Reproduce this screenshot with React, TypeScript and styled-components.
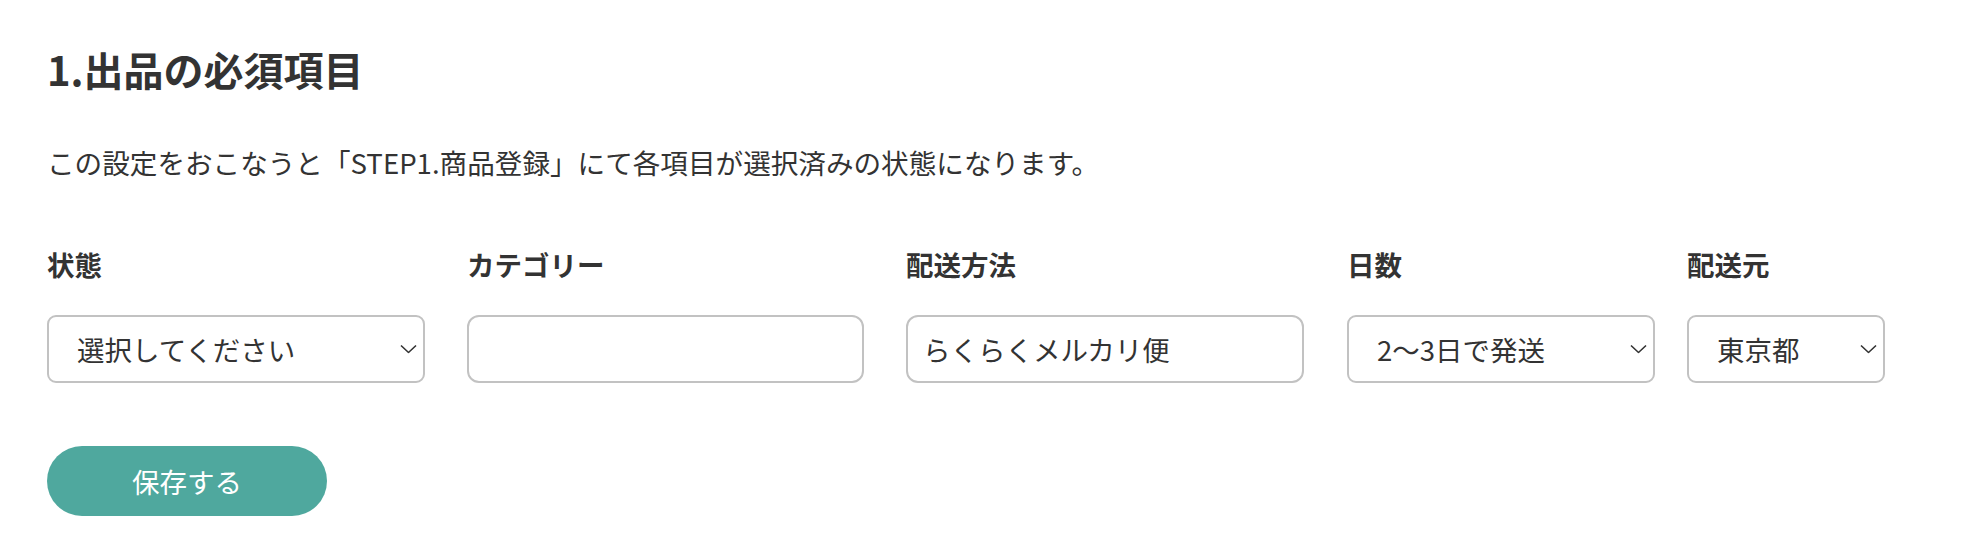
import styled, { createGlobalStyle } from "styled-components";

const FONT = `"Noto Sans CJK JP", "Noto Sans", sans-serif`;

const GlobalStyle = createGlobalStyle`
  body {
    margin: 0;
    background: #ffffff;
    font-family: ${FONT};
    color: #333333;
  }
`;

type FieldDef = {
  label: string;
  kind: "select" | "input";
  value: string;
  width: number;
  space: number;
};

const FIELDS: FieldDef[] = [
  { label: "状態", kind: "select", value: "選択してください", width: 378, space: 42 },
  { label: "カテゴリー", kind: "input", value: "", width: 397, space: 42 },
  { label: "配送方法", kind: "input", value: "らくらくメルカリ便", width: 398, space: 43 },
  { label: "日数", kind: "select", value: "2〜3日で発送", width: 308, space: 32 },
  { label: "配送元", kind: "select", value: "東京都", width: 198, space: 0 },
];

function Chevron() {
  return (
    <ChevronIcon width="17" height="9" viewBox="0 0 17 9" fill="none">
      <path d="M1 1 L8.5 8 L16 1" stroke="#333" strokeWidth="1.6" />
    </ChevronIcon>
  );
}

function RequiredSettings() {
  return (
    <Section>
      <Title>1.出品の必須項目</Title>
      <Lead>
        この設定をおこなうと「STEP1.商品登録」にて各項目が選択済みの状態になります。
      </Lead>
      <FieldRow>
        {FIELDS.map((field) => (
          <Field key={field.label} $space={field.space}>
            <Label>{field.label}</Label>
            {field.kind === "select" ? (
              <SelectWrap $width={field.width}>
                <Select defaultValue={field.value}>
                  <option value={field.value}>{field.value}</option>
                </Select>
                <Chevron />
              </SelectWrap>
            ) : (
              <TextInput $width={field.width} defaultValue={field.value} />
            )}
          </Field>
        ))}
      </FieldRow>
      <SaveButton type="button">保存する</SaveButton>
    </Section>
  );
}

export default function App() {
  return (
    <>
      <GlobalStyle />
      <RequiredSettings />
    </>
  );
}

const Section = styled.section`
  padding: 43px 47px 0;
  display: flex;
  flex-direction: column;
  align-items: flex-start;
`;

const Title = styled.h2`
  margin: 0;
  font-size: 40px;
  line-height: 52px;
  font-weight: 700;
  color: #333333;
`;

const Lead = styled.p`
  margin: 45px 0 0;
  font-size: 27.6px;
  line-height: 44px;
  color: #333333;
`;

const FieldRow = styled.div`
  display: flex;
  flex-direction: row;
  margin-top: 58px;
`;

const Field = styled.div<{ $space: number }>`
  display: flex;
  flex-direction: column;
  gap: 29px;
  margin-right: ${({ $space }) => $space}px;
`;

const Label = styled.div`
  font-size: 27.5px;
  line-height: 44px;
  font-weight: 700;
  color: #333333;
`;

const SelectWrap = styled.div<{ $width: number }>`
  position: relative;
  width: ${({ $width }) => $width}px;
  height: 68px;
`;

const Select = styled.select`
  appearance: none;
  width: 100%;
  height: 100%;
  box-sizing: border-box;
  border: 2px solid #c2c2c2;
  border-radius: 9px;
  background: #ffffff;
  padding: 0 40px 0 28px;
  font-family: ${FONT};
  font-size: 27.5px;
  color: #333333;
  outline: none;
`;

const ChevronIcon = styled.svg`
  position: absolute;
  right: 8px;
  top: 50%;
  transform: translateY(-50%);
  pointer-events: none;
`;

const TextInput = styled.input<{ $width: number }>`
  width: ${({ $width }) => $width}px;
  height: 68px;
  box-sizing: border-box;
  border: 2px solid #c2c2c2;
  border-radius: 12px;
  background: #ffffff;
  padding: 0 15px;
  font-family: ${FONT};
  font-size: 27.5px;
  color: #333333;
  outline: none;
`;

const SaveButton = styled.button`
  margin-top: 63px;
  width: 280px;
  height: 70px;
  border: none;
  border-radius: 35px;
  background: #4fa89e;
  color: #ffffff;
  font-family: ${FONT};
  font-size: 27.5px;
  cursor: pointer;
`;
